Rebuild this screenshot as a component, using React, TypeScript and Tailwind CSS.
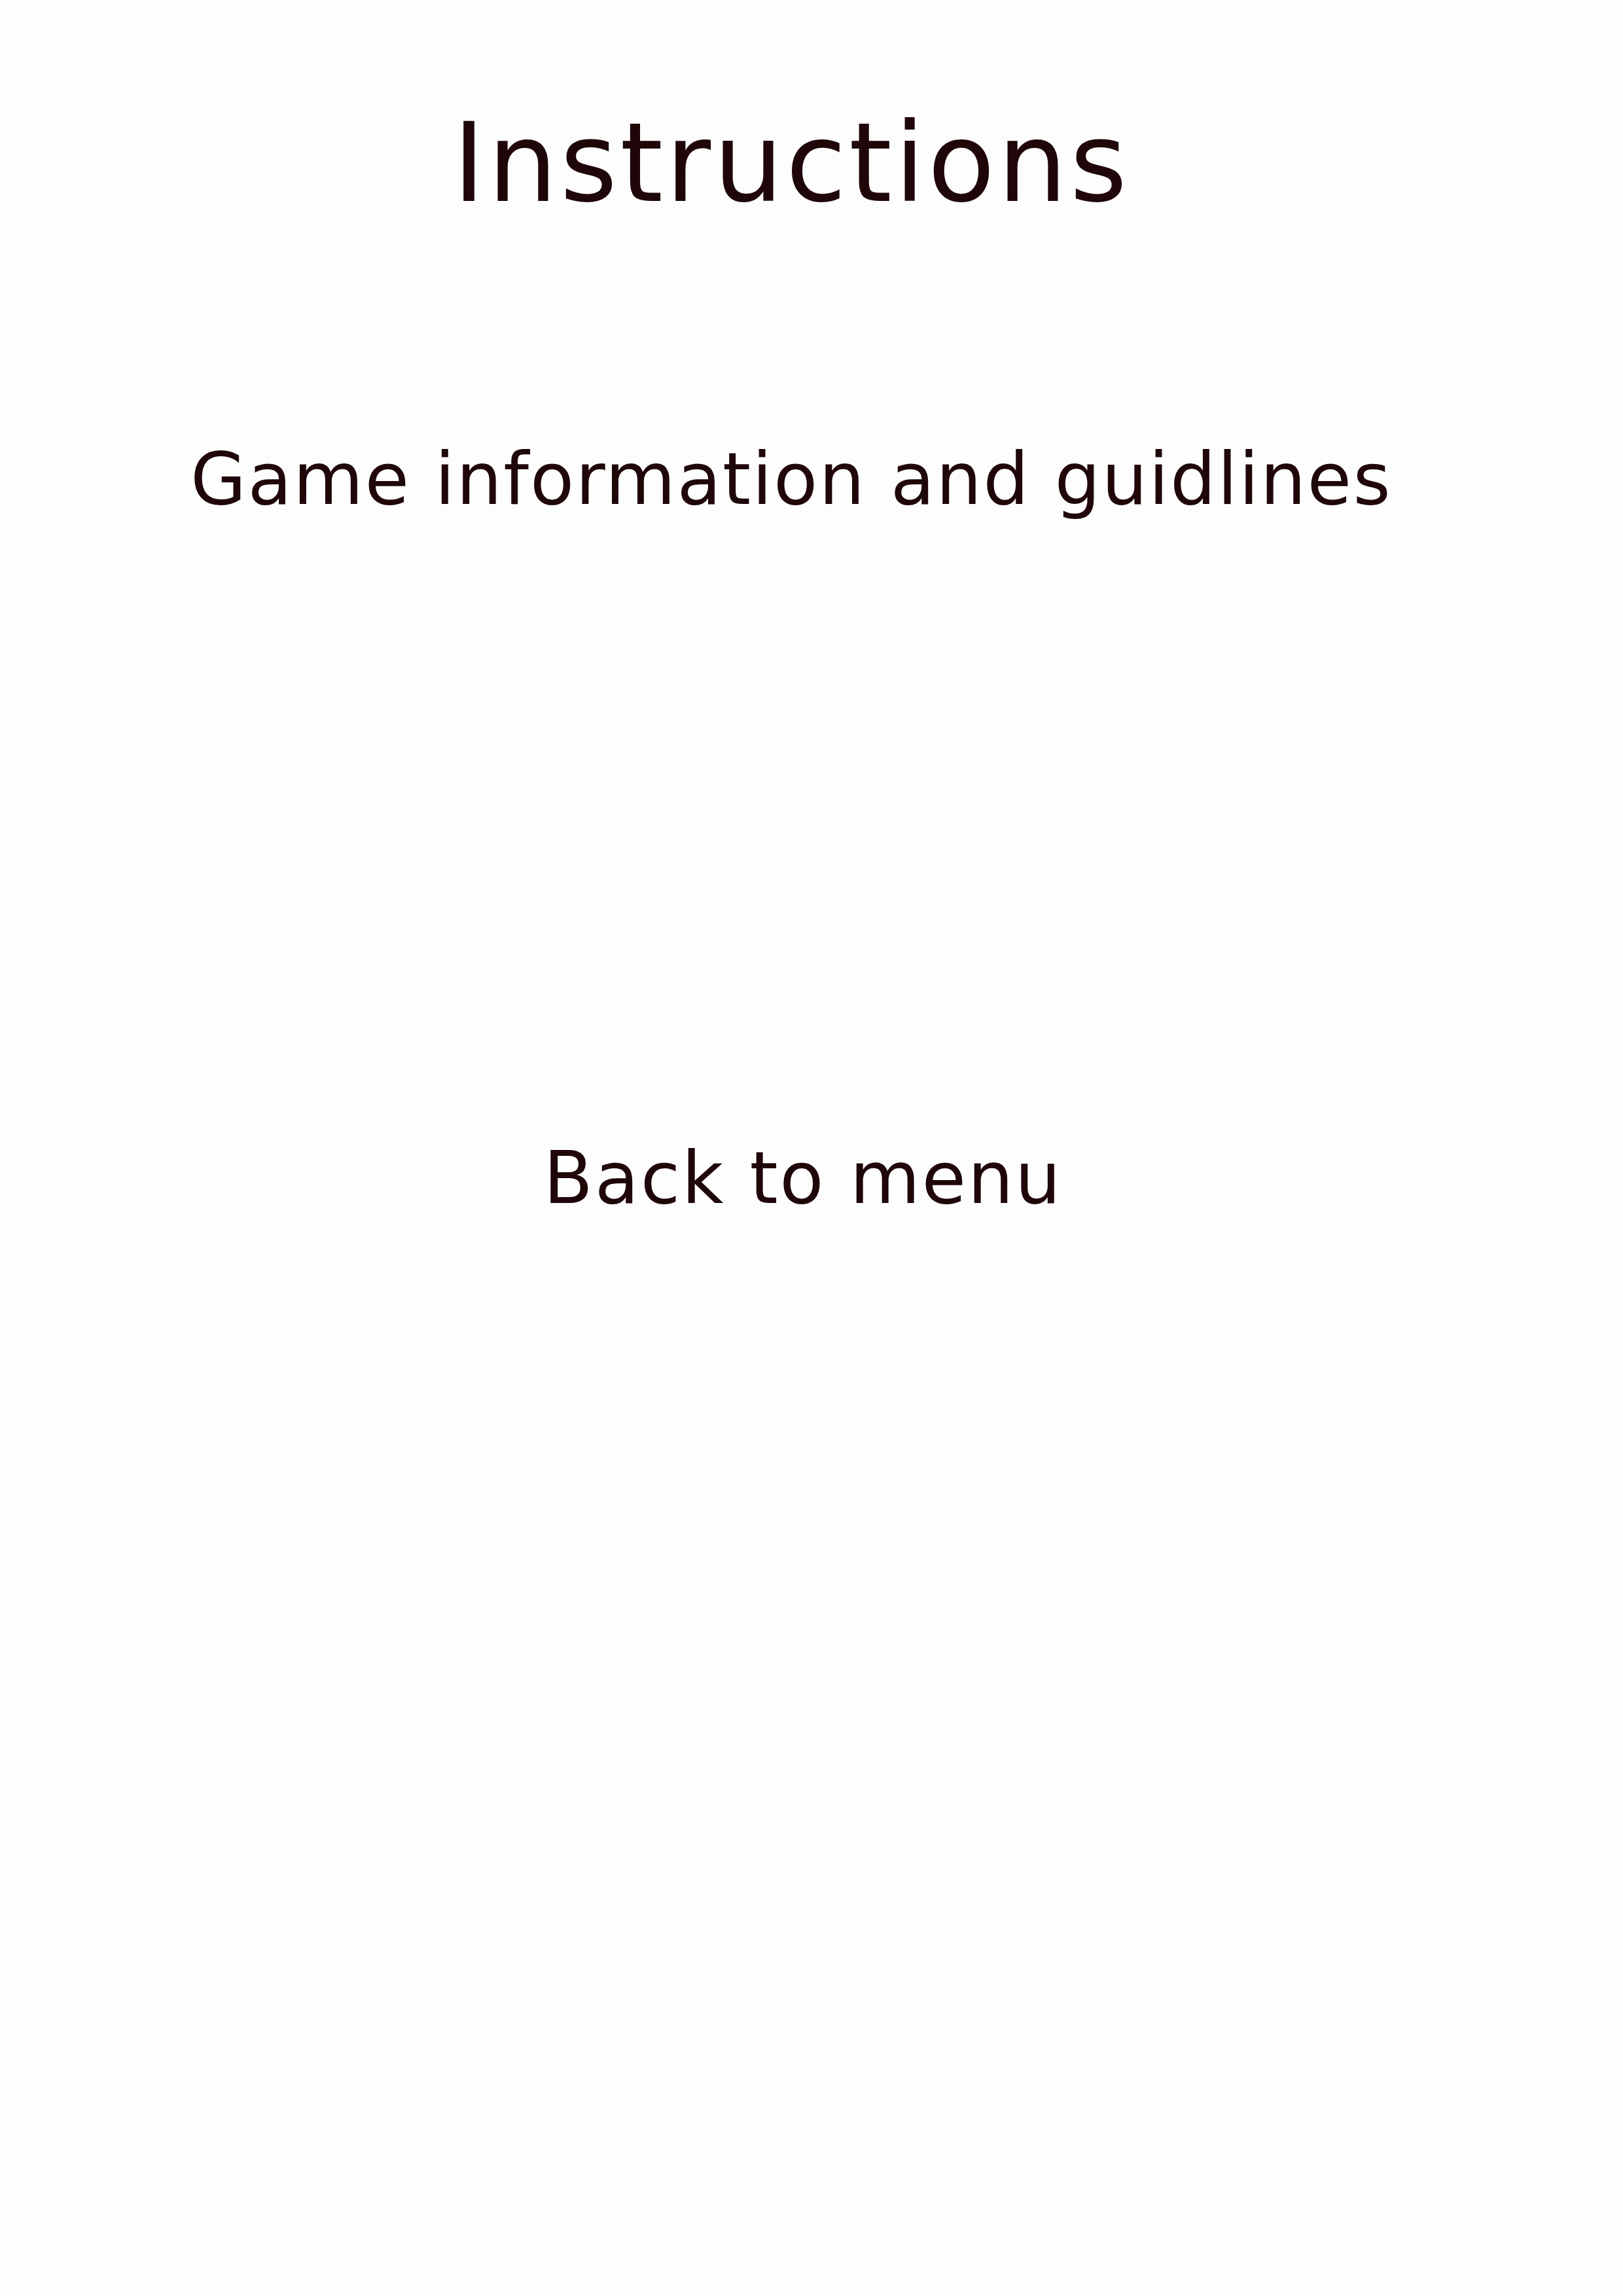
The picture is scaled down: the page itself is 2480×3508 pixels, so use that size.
export default function App() {
  return (
    <main
      className="flex min-h-[3508px] w-full flex-col items-center bg-[#fdfdfd] pt-[165px] text-[#1f0609]"
      style={{ fontFamily: 'Verdana, "DejaVu Sans", "Liberation Sans", sans-serif' }}
    >
      <h1 className="pr-[62px] text-[168px] font-normal leading-none tracking-[4px]">Instructions</h1>
      <p className="mt-[344px] pr-[62px] text-[110px] leading-none tracking-[2.2px]">Game information and guidlines</p>
      <button className="mt-[958px] pr-[26px] text-[110px] leading-none tracking-[2.6px]">Back to menu</button>
    </main>
  );
}
